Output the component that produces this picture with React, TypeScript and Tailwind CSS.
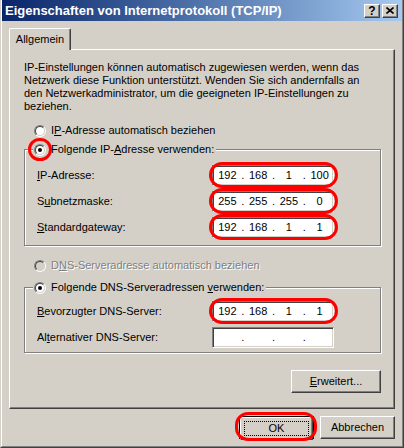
import React from 'react';

// Windows 2000 Eigenschaften-Dialog (TCP/IP)

function Radio({ checked, disabled, marked }: { checked?: boolean; disabled?: boolean; marked?: boolean }) {
  return (
    <span className="relative inline-block w-[12px] h-[12px] shrink-0 rounded-full border border-t-[#808080] border-l-[#808080] border-r-white border-b-white">
      <span
        className={`absolute inset-0 rounded-full border border-t-[#404040] border-l-[#404040] border-r-[#d4d0c8] border-b-[#d4d0c8] ${
          disabled ? 'bg-[#d4d0c8]' : 'bg-white'
        }`}
      />
      {checked && <span className="absolute left-[3px] top-[3px] w-[4px] h-[4px] rounded-full bg-black" />}
      {marked && (
        <span className="absolute -left-[7px] -top-[7px] w-[24px] h-[23px] rounded-full border-[3px] border-[#ff0000]" />
      )}
    </span>
  );
}

function IpField({ parts, marked }: { parts: string[]; marked?: boolean }) {
  return (
    <div className="relative">
      <div className="w-[122px] h-[21px] bg-white border border-t-[#808080] border-l-[#808080] border-r-white border-b-white shadow-[inset_1px_1px_0_#404040,inset_-1px_-1px_0_#d4d0c8] flex items-center pl-[1px]">
        {parts.map((p, i) => (
          <React.Fragment key={i}>
            <span className="w-[27px] text-center">{p}</span>
            {i < 3 && <span className="w-[4px] text-center">.</span>}
          </React.Fragment>
        ))}
      </div>
      {marked && (
        <div className="absolute -left-[3px] -right-[4px] -top-[3px] -bottom-[2px] rounded-[13px] border-[3px] border-[#ff0000]" />
      )}
    </div>
  );
}

function Row({ label, parts, marked }: { label: React.ReactNode; parts: string[]; marked?: boolean }) {
  return (
    <div className="flex items-center h-[21px]">
      <span className="w-[175px] whitespace-nowrap">{label}</span>
      <IpField parts={parts} marked={marked} />
    </div>
  );
}

function Button({ children, className = '' }: { children: React.ReactNode; className?: string }) {
  return (
    <div
      className={`h-[23px] flex items-center justify-center bg-[#d4d0c8] border border-t-white border-l-white border-r-[#404040] border-b-[#404040] shadow-[inset_-1px_-1px_0_#808080] ${className}`}
    >
      {children}
    </div>
  );
}

export default function App() {
  return (
    <div className="w-[404px] h-[448px] overflow-hidden bg-[#d4d0c8] border-l border-l-[#d4d0c8] border-r border-r-[#404040] border-b border-b-[#404040] font-['Liberation_Sans',Arial,sans-serif] text-[11px] leading-[13px] text-black">
      <div className="h-full border-l border-l-white border-r border-r-[#808080] border-b border-b-[#808080]">
        {/* Titelleiste */}
        <div className="h-[21px] flex items-center justify-between pl-[3px] pr-[4px] bg-linear-to-r from-[#0a246a] to-[#a6caf0]">
          <span className="text-white font-bold text-[13px] leading-[15px] whitespace-nowrap">Eigenschaften von Internetprotokoll (TCP/IP)</span>
          <div className="flex items-center gap-[2px]">
            <div className="w-[16px] h-[14px] flex items-center justify-center bg-[#d4d0c8] border border-t-white border-l-white border-r-[#404040] border-b-[#404040] shadow-[inset_-1px_-1px_0_#808080] font-bold text-[12px] leading-none">
              ?
            </div>
            <div className="w-[16px] h-[14px] flex items-center justify-center bg-[#d4d0c8] border border-t-white border-l-white border-r-[#404040] border-b-[#404040] shadow-[inset_-1px_-1px_0_#808080]">
              <svg width="8" height="7" viewBox="0 0 8 7">
                <path d="M0.5 0.5L7.5 6.5M7.5 0.5L0.5 6.5" stroke="black" strokeWidth="1.6" />
              </svg>
            </div>
          </div>
        </div>

        {/* Register */}
        <div className="flex ml-[7px] mt-[7px]">
          <div className="relative z-10 w-[62px] h-[22px] -mb-[1px] bg-[#d4d0c8] border-l border-t border-l-white border-t-white border-r border-r-[#404040] rounded-t-[2px] shadow-[inset_-1px_0_0_#808080] flex items-center justify-center">
            Allgemein
          </div>
        </div>

        <div className="ml-[7px] w-[386px] h-[360px] border-l border-t border-l-white border-t-white border-r border-b border-r-[#404040] border-b-[#404040] shadow-[inset_-1px_-1px_0_#808080] pl-[14px] flex flex-col">
          <p className="mt-[11px] whitespace-nowrap">
            IP-Einstellungen können automatisch zugewiesen werden, wenn das
            <br />
            Netzwerk diese Funktion unterstützt. Wenden Sie sich andernfalls an
            <br />
            den Netzwerkadministrator, um die geeigneten IP-Einstellungen zu
            <br />
            beziehen.
          </p>

          <div className="mt-[11px] ml-[10px] h-[13px] flex items-center gap-[5px]">
            <Radio />
            <span>
              I<u>P</u>-Adresse automatisch beziehen
            </span>
          </div>

          <fieldset className="mt-[6px] w-[357px] h-[103px] border border-[#808080] shadow-[1px_1px_0_#fff,inset_1px_1px_0_#fff] pl-[12px]">
            <legend className="-ml-[4px] pl-[1px] pr-[2px] bg-[#d4d0c8]">
              <div className="h-[13px] flex items-center gap-[5px]">
                <Radio checked marked />
                <span>
                  Folgende IP-<u>A</u>dresse verwenden:
                </span>
              </div>
            </legend>
            <div className="mt-[9px] flex flex-col gap-[5px]">
              <Row label={<><u>I</u>P-Adresse:</>} parts={['192', '168', '1', '100']} marked />
              <Row label={<>S<u>u</u>bnetzmaske:</>} parts={['255', '255', '255', '0']} marked />
              <Row label={<><u>S</u>tandardgateway:</>} parts={['192', '168', '1', '1']} marked />
            </div>
          </fieldset>

          <div className="mt-[13px] ml-[10px] h-[13px] flex items-center gap-[5px]">
            <Radio disabled />
            <span className="text-[#808080] [text-shadow:1px_1px_0_#fff]">
              D<u>N</u>S-Serveradresse automatisch beziehen
            </span>
          </div>

          <fieldset className="mt-[9px] w-[357px] h-[72px] border border-[#808080] shadow-[1px_1px_0_#fff,inset_1px_1px_0_#fff] pl-[12px]">
            <legend className="-ml-[4px] pl-[1px] pr-[2px] bg-[#d4d0c8]">
              <div className="h-[13px] flex items-center gap-[5px]">
                <Radio checked />
                <span>
                  Folgende DNS-Serveradressen <u>v</u>erwenden:
                </span>
              </div>
            </legend>
            <div className="mt-[7px] flex flex-col gap-[5px]">
              <Row label={<><u>B</u>evorzugter DNS-Server:</>} parts={['192', '168', '1', '1']} marked />
              <Row label={<>Al<u>t</u>ernativer DNS-Server:</>} parts={['', '', '', '']} />
            </div>
          </fieldset>

          <div className="mt-[17px] w-[357px] flex justify-end">
            <Button className="w-[90px]">
              <span>
                <u>E</u>rweitert...
              </span>
            </Button>
          </div>
        </div>

        {/* Schaltflächen */}
        <div className="mt-[7px] pr-[7px] flex justify-end gap-[6px]">
          <div className="relative">
            <div className="w-[75px] h-[23px] border border-black">
              <Button className="h-[21px] relative">
                <span className="absolute inset-[3px] border border-dotted border-black" />
                <span className="relative">OK</span>
              </Button>
            </div>
            <div className="absolute -left-[4px] -right-[3px] -top-[4px] -bottom-[2px] rounded-[13px] border-[3px] border-[#ff0000]" />
          </div>
          <Button className="w-[75px]">Abbrechen</Button>
        </div>
      </div>
    </div>
  );
}
